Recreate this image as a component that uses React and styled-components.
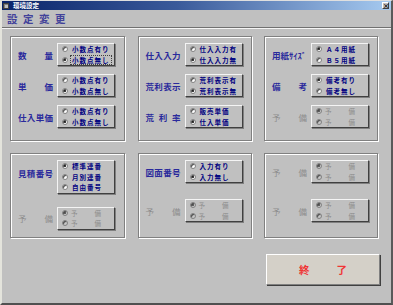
import React from 'react'
import styled, { createGlobalStyle } from 'styled-components'

const GlobalStyle = createGlobalStyle`
  html, body {
    margin: 0;
    padding: 0;
    background: #c0c0c0;
  }
  * {
    box-sizing: border-box;
  }
`

const Window = styled.div`
  width: 393px;
  height: 305px;
  background: #c0c0c0;
  border-top: 1px solid #dfdfdf;
  border-left: 2px solid #e4e4dc;
  border-right: 2px solid #5a5a5a;
  border-bottom: 2px solid #505050;
  font-family: "Noto Sans CJK JP", "Noto Sans", sans-serif;
  overflow: hidden;
`

const TitleBar = styled.div`
  height: 9px;
  display: flex;
  align-items: center;
  padding: 0 2px 0 1px;
  background: linear-gradient(90deg, #0a246a 0%, #3a5a9a 45%, #a6caf0 100%);
`

const TitleIcon = styled.div`
  width: 6px;
  height: 6px;
  background: #c0c0c0;
  border: 1px solid #404040;
  box-shadow: inset 1px 1px 0 #808080;
`

const TitleText = styled.span`
  margin-left: 4px;
  color: #fff;
  font-size: 6.5px;
  font-weight: bold;
  line-height: 9px;
`

const CloseButton = styled.div`
  margin-left: auto;
  width: 7px;
  height: 7px;
  background: #c0c0c0;
  border-top: 1px solid #fff;
  border-left: 1px solid #fff;
  border-right: 1px solid #404040;
  border-bottom: 1px solid #404040;
  color: #000;
  font-size: 6px;
  font-weight: bold;
  line-height: 5px;
  text-align: center;
`

const Header = styled.div`
  height: 18px;
  padding-left: 5px;
  display: flex;
  align-items: center;
  color: #42429a;
  font-size: 10.5px;
  font-weight: bold;
  letter-spacing: 5.5px;
  border-bottom: 1px solid #707070;
  box-shadow: 0 1px 0 #f4f4f4;
`

const Body = styled.div`
  padding: 8px 0 0 8px;
`

const Grid = styled.div`
  display: grid;
  grid-template-columns: 115px 114px 114px;
  grid-template-rows: 105px 85px;
  column-gap: 12.5px;
  row-gap: 12px;
`

const Group = styled.div`
  border: 1px solid #808080;
  box-shadow: 1px 1px 0 #fff, inset 1px 1px 0 #fff;
  padding: 6px 0 0 7px;
  display: flex;
  flex-direction: column;
  gap: ${p => p.$gap}px;
`

const Item = styled.div`
  display: flex;
  align-items: center;
`

const Label = styled.div`
  width: 35px;
  margin-right: 4px;
  margin-bottom: ${p => p.$raise || 0}px;
  display: flex;
  justify-content: ${p => (p.$spread ? 'space-between' : 'flex-start')};
  color: ${p => (p.$disabled ? '#8c8c8c' : '#2a2a9c')};
  font-size: 8.5px;
  font-weight: ${p => (p.$disabled ? 'normal' : 'bold')};
  line-height: 10px;
  white-space: nowrap;
`

const Frame = styled.div`
  width: 58px;
  border-top: 1px solid #f4f4f4;
  border-left: 1px solid #f4f4f4;
  border-right: 1px solid #404040;
  border-bottom: 1px solid #404040;
  box-shadow: 1px 1px 0 #808080;
  padding-left: 4px;
  display: flex;
  flex-direction: column;
`

const Row = styled.div`
  height: 10.5px;
  display: flex;
  align-items: center;
`

const Circle = styled.span`
  width: 6px;
  height: 6px;
  flex: none;
  margin-right: 3px;
  border-radius: 50%;
  background: ${p => (p.$disabled ? '#c8c8c8' : '#fff')};
  border: 1px solid #808080;
  box-shadow: inset 1px 1px 0 #404040;
  display: flex;
  align-items: center;
  justify-content: center;
  &::after {
    content: '';
    display: ${p => (p.$checked ? 'block' : 'none')};
    width: 2px;
    height: 2px;
    border-radius: 50%;
    background: ${p => (p.$disabled ? '#404040' : '#000')};
  }
`

const RadioText = styled.span`
  padding: 0 1px;
  color: #000080;
  font-size: 6.5px;
  font-weight: bold;
  letter-spacing: 1px;
  line-height: 8px;
  white-space: nowrap;
  outline: ${p => (p.$focused ? '1px dotted #404040' : 'none')};
`

const DisabledText = styled.span`
  width: 30px;
  display: flex;
  justify-content: space-between;
  color: #8c8c8c;
  font-size: 6.5px;
  line-height: 8px;
`

const Footer = styled.div`
  display: grid;
  grid-template-columns: 115px 114px 114px;
  column-gap: 12.5px;
  margin-top: 16px;
`

const ExitButton = styled.button`
  grid-column: 3;
  margin-left: 2px;
  width: 114px;
  height: 31px;
  background: #d4d0c8;
  border-top: 1px solid #fff;
  border-left: 1px solid #fff;
  border-right: 1px solid #808080;
  border-bottom: 1px solid #808080;
  box-shadow: 1px 1px 0 #404040;
  display: flex;
  align-items: center;
  justify-content: center;
  gap: 27px;
  color: #f03434;
  font-family: "Noto Sans CJK JP", sans-serif;
  font-size: 10.5px;
  font-weight: bold;
  padding: 0;
`

const spreadChars = text => text.split('').map((c, i) => <span key={i}>{c}</span>)

const Radio = ({ checked, focused, children }) => (
  <Row>
    <Circle $checked={checked} />
    <RadioText $focused={focused}>{children}</RadioText>
  </Row>
)

const Spare = () => (
  <Frame>
    <Row>
      <Circle $checked $disabled />
      <DisabledText>{spreadChars('予備')}</DisabledText>
    </Row>
    <Row>
      <Circle $disabled />
      <DisabledText>{spreadChars('予備')}</DisabledText>
    </Row>
  </Frame>
)

const SpareItem = () => (
  <Item>
    <Label $spread $disabled>{spreadChars('予備')}</Label>
    <Spare />
  </Item>
)

const Option = ({ label, spread, raise, options, checked, focused }) => (
  <Item>
    <Label $spread={spread} $raise={raise}>{spread ? spreadChars(label) : label}</Label>
    <Frame>
      {options.map((o, i) => (
        <Radio key={o} checked={i === checked} focused={i === focused}>
          {o}
        </Radio>
      ))}
    </Frame>
  </Item>
)

const App = () => {
  return (
    <>
      <GlobalStyle />
      <Window>
        <TitleBar>
          <TitleIcon />
          <TitleText>環境設定</TitleText>
          <CloseButton>×</CloseButton>
        </TitleBar>
        <Header>設定変更</Header>
        <Body>
          <Grid>
            <Group $gap={8}>
              <Option label="数量" spread options={['小数点有り', '小数点無し']} checked={1} focused={1} />
              <Option label="単価" spread options={['小数点有り', '小数点無し']} checked={1} />
              <Option label="仕入単価" spread options={['小数点有り', '小数点無し']} checked={1} />
            </Group>
            <Group $gap={8}>
              <Option label="仕入入力" spread options={['仕入入力有', '仕入入力無']} checked={1} />
              <Option label="荒利表示" spread options={['荒利表示有', '荒利表示無']} checked={1} />
              <Option label="荒利率" spread options={['販売単価', '仕入単価']} checked={1} />
            </Group>
            <Group $gap={8}>
              <Option label="用紙ｻｲｽﾞ" options={['Ａ４用紙', 'Ｂ５用紙']} checked={0} />
              <Option label="備考" spread options={['備考有り', '備考無し']} checked={0} />
              <SpareItem />
            </Group>
            <Group $gap={13}>
              <Option label="見積番号" spread raise={8} options={['標準連番', '月別連番', '自由番号']} checked={0} />
              <SpareItem />
            </Group>
            <Group $gap={16}>
              <Option label="図面番号" spread options={['入力有り', '入力無し']} checked={1} />
              <SpareItem />
            </Group>
            <Group $gap={16}>
              <SpareItem />
              <SpareItem />
            </Group>
          </Grid>
          <Footer>
            <ExitButton>
              <span>終</span>
              <span>了</span>
            </ExitButton>
          </Footer>
        </Body>
      </Window>
    </>
  )
}

export default App
